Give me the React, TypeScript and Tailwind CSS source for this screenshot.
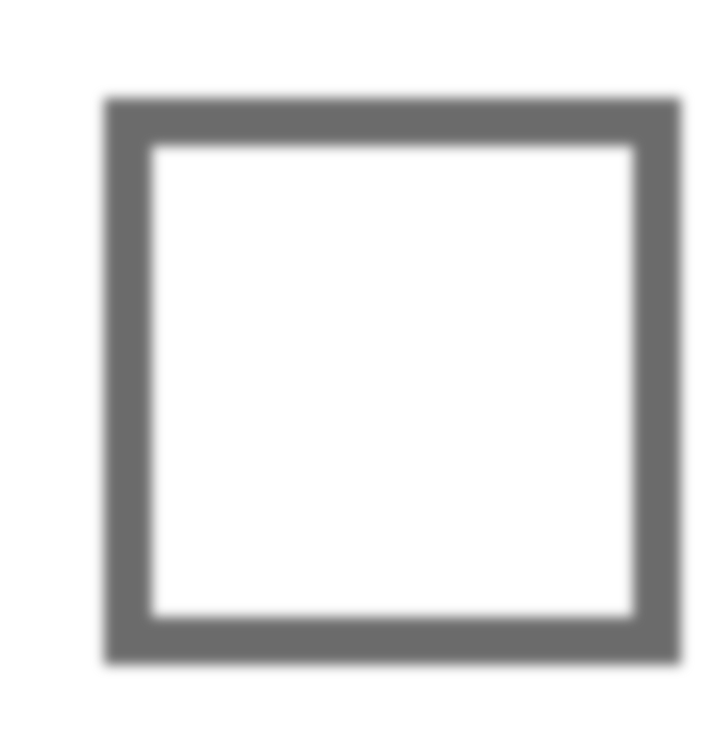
export default function App() {
  return (
    <div className="w-[720px] h-[738px] bg-white overflow-hidden pt-[98px] pl-[104px]">
      <div className="w-[577px] h-[567px] border-[48px] border-[#6b6b6b] blur-[6px]" />
    </div>
  );
}
